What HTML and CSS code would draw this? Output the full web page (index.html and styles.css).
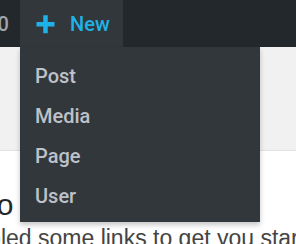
FILE: index.html
```html
<!DOCTYPE html>
<html lang="en">
<head>
<meta charset="utf-8">
<title>Dashboard</title>
<link rel="stylesheet" href="styles.css">
</head>
<body>
<div class="adminbar">
  <div class="ab-comments"><span class="ab-count">0</span></div>
  <div class="ab-new">
    <svg class="ab-plus" width="20" height="20" viewBox="0 0 20 20" aria-hidden="true">
      <rect x="0.5" y="8" width="18" height="4.5" fill="currentColor"/>
      <rect x="7.25" y="1.25" width="4.5" height="18" fill="currentColor"/>
    </svg>
    <span class="ab-label">New</span>
    <ul class="ab-submenu">
      <li>Post</li>
      <li>Media</li>
      <li>Page</li>
      <li>User</li>
    </ul>
  </div>
</div>
<main class="content">
  <section class="welcome">
    <h2 class="welcome-title">Welcome to WordPress!</h2>
    <p class="welcome-text">We’ve assembled some links to get you started:</p>
  </section>
</main>
</body>
</html>
```
FILE: styles.css
```css
html, body {
  margin: 0;
  padding: 0;
  height: 100%;
}
body {
  background: #f1f1f1;
  font-family: "Liberation Sans", Arial, sans-serif;
  overflow: hidden;
}
.adminbar {
  position: relative;
  z-index: 10;
  height: 47px;
  background: #23282d;
  display: flex;
  align-items: stretch;
  font-family: Roboto, "Liberation Sans", sans-serif;
  font-weight: 500;
}
.ab-comments {
  width: 20px;
  overflow: hidden;
  display: flex;
  align-items: center;
}
.ab-count {
  margin-left: -2.5px;
  font-size: 20px;
  line-height: 46px;
  color: #a0a5aa;
}
.ab-new {
  position: relative;
  width: 103px;
  background: #32373c;
  display: flex;
  align-items: center;
  padding-left: 16px;
  box-sizing: border-box;
  color: #1fb2e8;
}
.ab-plus {
  flex: none;
  margin-right: 14px;
}
.ab-label {
  font-size: 20px;
  line-height: 46px;
}
.ab-submenu {
  position: absolute;
  top: 100%;
  left: 0;
  width: 240px;
  margin: 0;
  padding: 9px 0 6px;
  list-style: none;
  background: #32373c;
  box-shadow: 0 3px 5px rgba(0, 0, 0, 0.22);
}
.ab-submenu li {
  padding-left: 15px;
  font-size: 20px;
  line-height: 40px;
  color: #bec2c8;
}
.content {
  padding-top: 103px;
}
.welcome {
  background: #fff;
  border-top: 1px solid #e0e0e2;
  min-height: 200px;
  overflow: hidden;
}
.welcome-title {
  margin: 36px 0 0 -144.5px;
  font-size: 30px;
  line-height: 36px;
  font-weight: normal;
  color: #23282d;
  white-space: nowrap;
}
.welcome-text {
  margin: 0 0 0 -149.5px;
  font-size: 23px;
  line-height: 30px;
  color: #444;
  white-space: nowrap;
}
```
